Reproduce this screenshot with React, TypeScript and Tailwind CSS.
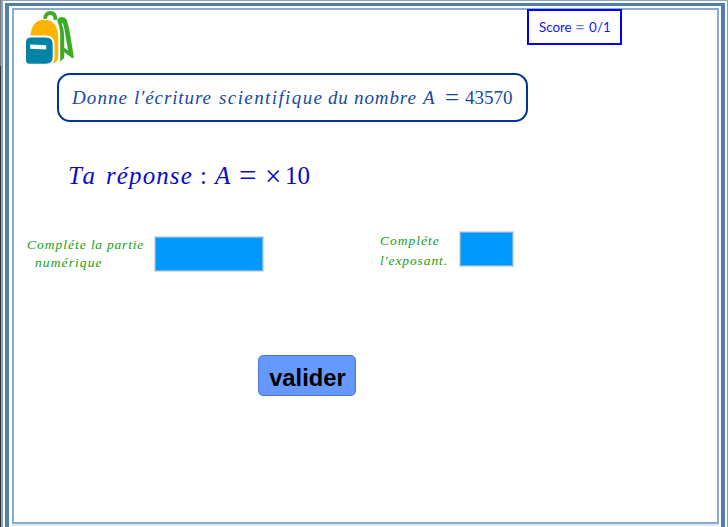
const serif = "font-['Liberation_Serif',serif]";

type WordProps = { text: string; className: string };

function Word({ text, className }: WordProps) {
  return <span className={`block shrink-0 whitespace-nowrap ${className}`}>{text}</span>;
}

function Backpack() {
  return (
    <svg className="block h-[54px] w-[50px]" viewBox="0 0 50 54" aria-label="backpack">
      <path d="M19.300 8C19 4 21 2 24.500 2S29.500 4 29.500 9" fill="none" stroke="#3dab27" strokeWidth="3.800" />
      <path d="M31.500 9C32.500 5 39 5 40.800 9L43 17L48 46.500L46 47L36.500 40L36.500 35.500L42 39.500L38 16C37 11 35.500 11 35 14Z" fill="#3dab27" />
      <path d="M31 9L35 11C38 17 38.200 23 38.200 29V47L34.200 50.500V25C34.200 19 33.500 15 31 9Z" fill="#3dab27" />
      <path d="M4 27C4 14 10 8.300 18.500 8.300C28 8.300 32.800 16 32.800 27V44Q32.800 53 25 53H4Z" fill="#ffb400" stroke="#fff" strokeWidth="1" />
      <path d="M0 29Q1 24.500 6 24.500H20Q28.500 24.500 28.500 33V46Q28.500 54 22 54H0Z" fill="#fff" />
      <path d="M0 31Q0 26.500 5 26.500H20Q26.700 26.500 26.700 33V46Q26.700 52.800 20 52.800H3Q0 52.800 0 49Z" fill="#0083a5" />
      <path d="M4.200 33.500L20.200 34.300V38.500L4.200 37.700Z" fill="#fff" />
    </svg>
  );
}

export default function App() {
  return (
    <div className="flex h-[527px] w-[728px] overflow-hidden bg-white">
      <div className="flex w-px shrink-0 flex-col">
        <div className="h-[66px] bg-[#777b82]" />
        <div className="flex-1 bg-[#363636]" />
      </div>
      <div className="h-[530px] w-[727px] shrink-0 border-t border-r border-l-2 border-[#86a6c5] pt-[2px] pr-[2px] pl-[2px]">
        <div className="h-[528px] border-t-[3px] border-r-4 border-l-4 border-[#5080aa] pt-[2px] pr-[2px] pl-[3px]">
          <div className="h-[516px] border-2 border-[#8babc8] shadow-[0_2px_0_#dce8f1]">
            <div className="-mt-[1px] flex h-[63px] items-start pl-[12px]">
              <div className="mt-[2px]"><Backpack /></div>
              <div className="ml-[451px] flex h-[36px] w-[95px] border-2 border-[#0000ff] pl-[10px] font-['Lato',sans-serif] text-[13.3px] leading-[32px] text-[#1515f5]">
                <Word text="Score" className="w-[36px]" />
                <Word text="=" className="w-[14px] text-[17px] leading-[31px] opacity-60" />
                <Word text="0/1" className="tracking-[0.2px]" />
              </div>
            </div>
            <div className={`ml-[43px] mt-[1px] flex h-[49px] w-[471px] items-center rounded-[13px] border-2 border-[#003399] pl-[13px] text-[19px] leading-[47px] text-[#174a9f] ${serif}`}>
              <Word text="Donne" className="w-[62px] italic tracking-[1.1px]" />
              <Word text="l′écriture" className="w-[85px] italic tracking-[0.9px]" />
              <Word text="scientifique" className="w-[109px] italic tracking-[1.4px]" />
              <Word text="du" className="w-[26px] italic tracking-[0.7px]" />
              <Word text="nombre" className="w-[69px] italic tracking-[0.9px]" />
              <Word text="A" className="w-[21px] italic" />
              <Word text="=" className="w-[21px] pl-[1px] text-[25px]" />
              <Word text="43570" className="" />
            </div>
            <div className={`mt-[38px] ml-[54px] flex h-[32px] text-[25px] leading-[32px] text-[#0b0bc4] ${serif}`}>
              <Word text="Ta" className="w-[38px] italic tracking-[3px]" />
              <Word text="réponse" className="w-[94px] italic tracking-[1.1px]" />
              <Word text=":" className="w-[15px]" />
              <Word text="A" className="w-[24px] italic" />
              <Word text="=" className="w-[26px] text-[31px]" />
              <Word text="×" className="w-[20px] text-[29px]" />
              <Word text="10" className="" />
            </div>
            <div className={`mt-[40px] flex h-[42px] text-[13.5px] text-[#139f13] italic ${serif}`}>
              <div className="mt-[4px] ml-[13px] w-[127px] shrink-0 leading-[18px]">
                <div className="flex">
                  <Word text="Compléte" className="w-[64px] tracking-[1px]" />
                  <Word text="la" className="w-[16px] tracking-[0.5px]" />
                  <Word text="partie" className="tracking-[0.8px]" />
                </div>
                <Word text="numérique" className="pl-[8px] tracking-[1.1px]" />
              </div>
              <div className="mt-[4px] h-[36px] w-[110px] shrink-0 border border-[#d8dcdf] bg-[#0099ff] shadow-[inset_0_0_0_1px_#6fb4e4]" />
              <div className="-mt-px ml-[116px] w-[79px] shrink-0 leading-[20px]">
                <Word text="Compléte" className="tracking-[1px]" />
                <Word text="l′exposant." className="tracking-[0.9px]" />
              </div>
              <div className="-mt-px h-[36px] w-[55px] shrink-0 border border-[#d8dcdf] bg-[#0099ff] shadow-[inset_0_0_0_1px_#6fb4e4]" />
            </div>
            <button className="mt-[81px] ml-[244px] block h-[41px] w-[98px] rounded-[5px] border border-[#4f79cf] bg-[#6699ff] pl-[1px] font-['Liberation_Sans',sans-serif] text-[23.8px] leading-[43px] font-bold text-black">
              valider
            </button>
          </div>
        </div>
      </div>
    </div>
  );
}
